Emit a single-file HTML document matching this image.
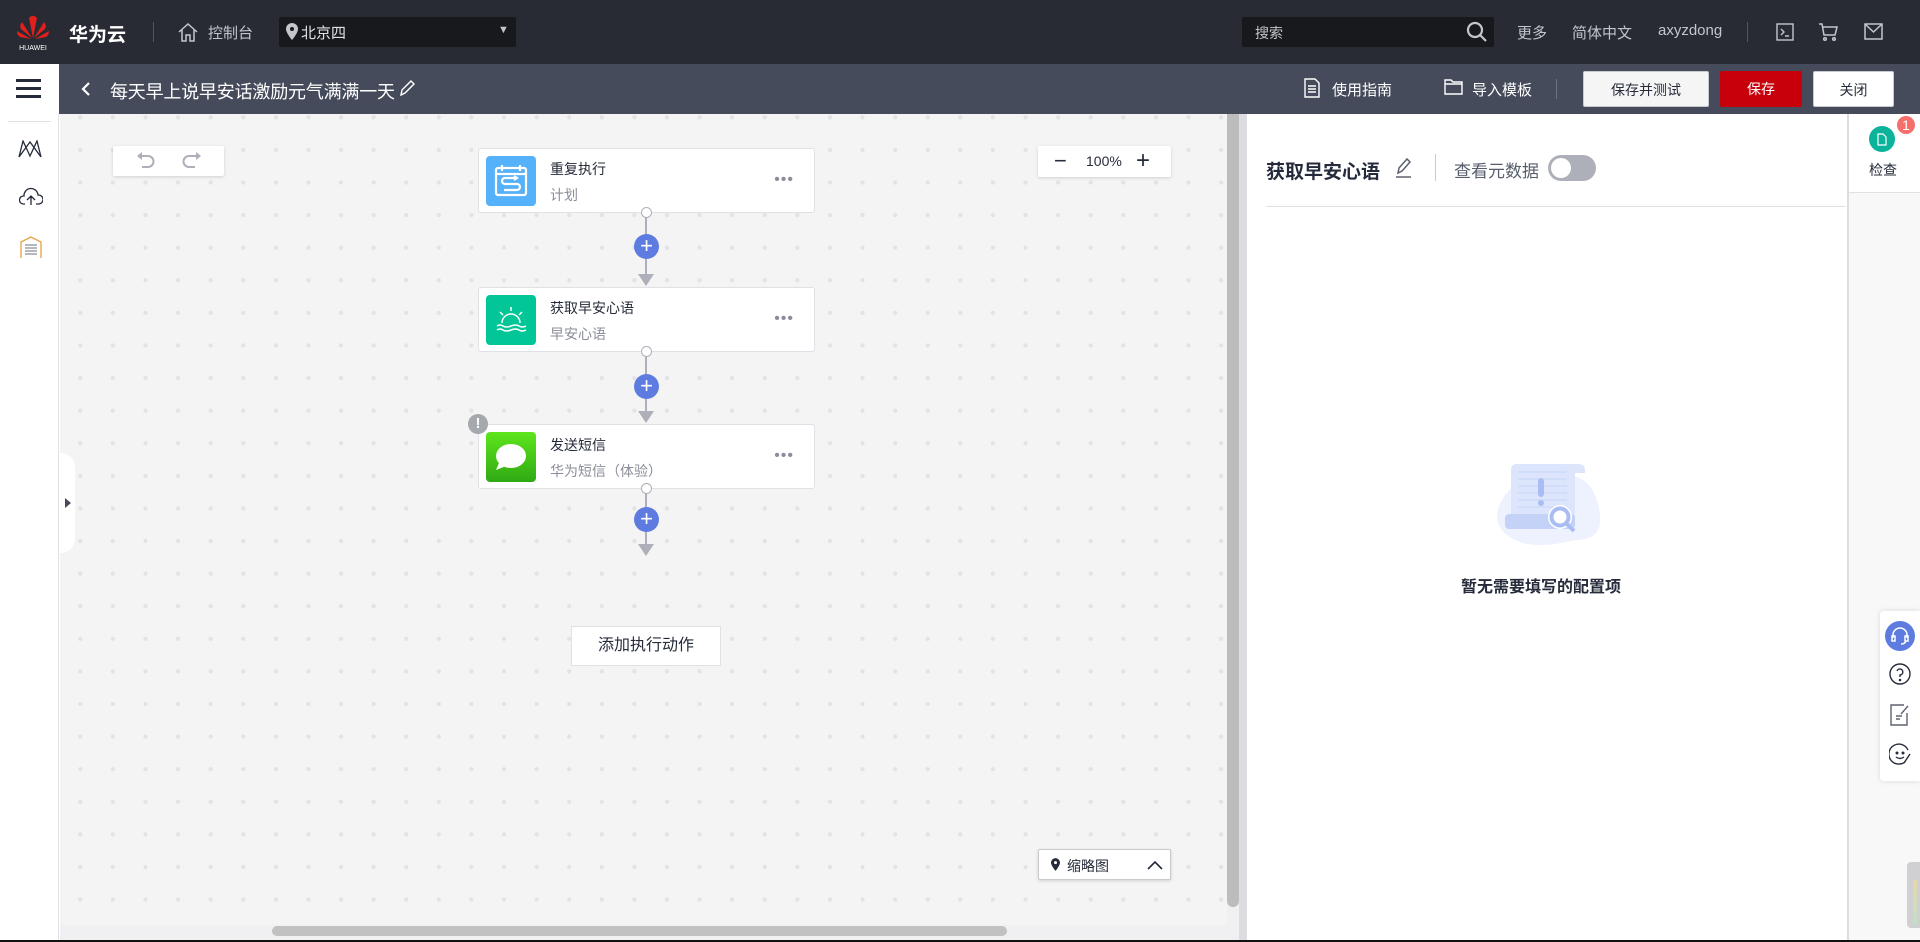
<!DOCTYPE html>
<html><head><meta charset="utf-8"><style>
*{margin:0;padding:0;box-sizing:border-box}
body{width:1920px;height:942px;overflow:hidden;font-family:"Liberation Sans","Noto Sans CJK SC",sans-serif;background:#fff;position:relative;color:#252b3a}
.abs{position:absolute}
.top{left:0;top:0;width:1920px;height:64px;background:#282b33;color:#c4c6cc;font-size:15px}
.sub{left:0;top:64px;width:1920px;height:50px;background:#454b5a}
.side{left:0;top:64px;width:59px;height:878px;background:#fff;border-right:1px solid #dfe1e6}
.canvas{left:60px;top:114px;width:1167px;height:811px;background-color:#f4f4f5;background-image:radial-gradient(circle,#e3e3e5 2px,transparent 2.3px);background-size:32.6px 32.6px;background-position:4px -13px}
.card{left:478px;width:337px;height:65px;background:#fff;border:1px solid #dfe1e6;border-radius:3px}
.card .ic{position:absolute;left:7px;top:7px;width:50px;height:50px;border-radius:4px}
.card .t{position:absolute;left:71px;top:10px;font-size:14px;color:#252b3a}
.card .s{position:absolute;left:71px;top:36px;font-size:14px;color:#8a8e99}
.card .d{position:absolute;right:20px;top:22px;font-size:16px;color:#8a8e99;letter-spacing:1px}
.line{width:2px;background:#adb0b8}
.plus{width:25px;height:25px;border-radius:50%;background:#5e7ce0;color:#fff;text-align:center;line-height:24px;font-size:22px}
.oc{width:11px;height:11px;border-radius:50%;border:1.5px solid #adb0b8;background:#fff}
.arr{width:0;height:0;border-left:8px solid transparent;border-right:8px solid transparent;border-top:12px solid #adb0b8}
.box{background:#fff;border-radius:2px;box-shadow:0 1px 3px rgba(0,0,0,.15)}
.btn{top:71px;height:36px;border-radius:2px;font-size:14px;text-align:center;line-height:36px}
</style></head><body>
<div class="abs top">
  <svg class="abs" style="left:14px;top:12px" width="38" height="40" viewBox="0 0 38 40">
    <g fill="#e0201c"><path d="M19 26 L15 6 Q18 3 19 4Z"/><path d="M19 26 L23 6 Q20 3 19 4Z"/><path d="M18 26 L8 10 Q5 14 7 17Z"/><path d="M20 26 L30 10 Q33 14 31 17Z"/><path d="M17 27 L3 19 Q3 23 6 25Z"/><path d="M21 27 L35 19 Q35 23 32 25Z"/></g>
    <text x="19" y="38" font-size="7" fill="#fff" text-anchor="middle" font-family="Liberation Sans">HUAWEI</text>
  </svg>
  <div class="abs" style="left:69px;top:20px;font-size:19px;font-weight:bold;color:#fff">华为云</div>
  <div class="abs" style="left:153px;top:22px;width:1px;height:20px;background:#555"></div>
  <svg class="abs" style="left:177px;top:21px" width="22" height="22" viewBox="0 0 22 22" fill="none" stroke="#c4c6cc" stroke-width="1.5"><path d="M2 11 L11 3 L20 11 M5 9 V20 H9 V14 H13 V20 H17 V9"/></svg>
  <div class="abs" style="left:208px;top:22px">控制台</div>
  <div class="abs" style="left:279px;top:17px;width:237px;height:30px;background:#18191c;border-radius:2px"></div>
  <svg class="abs" style="left:286px;top:23px" width="12" height="17" viewBox="0 0 12 17"><path d="M6 0a6 6 0 0 0-6 6c0 4 6 11 6 11s6-7 6-11a6 6 0 0 0-6-6z" fill="#c4c6cc"/><circle cx="6" cy="6" r="2" fill="#18191c"/></svg>
  <div class="abs" style="left:301px;top:22px;color:#dfe1e6">北京四</div>
  <div class="abs" style="left:498px;top:24px;font-size:11px;color:#c4c6cc">▼</div>
  <div class="abs" style="left:1242px;top:17px;width:252px;height:30px;background:#18191c;border-radius:2px"></div>
  <div class="abs" style="left:1255px;top:23px;font-size:14px;color:#c4c6cc">搜索</div>
  <svg class="abs" style="left:1466px;top:21px" width="22" height="22" viewBox="0 0 22 22" fill="none" stroke="#c4c6cc" stroke-width="2.2"><circle cx="9" cy="9" r="7"/><path d="M14 14 L20 20"/></svg>
  <div class="abs" style="left:1517px;top:22px">更多</div>
  <div class="abs" style="left:1572px;top:22px">简体中文</div>
  <div class="abs" style="left:1658px;top:22px">axyzdong</div>
  <div class="abs" style="left:1747px;top:22px;width:1px;height:20px;background:#555"></div>
  <svg class="abs" style="left:1776px;top:23px" width="18" height="18" viewBox="0 0 18 18" fill="none" stroke="#c4c6cc" stroke-width="1.4"><rect x="1" y="1" width="16" height="16"/><path d="M5 6 L8 9 L5 12 M9 13 H13"/></svg>
  <svg class="abs" style="left:1818px;top:22px" width="20" height="20" viewBox="0 0 20 20" fill="none" stroke="#c4c6cc" stroke-width="1.5"><path d="M1 2 H4 L6 13 H17 L19 5 H5"/><circle cx="7" cy="17" r="1.3"/><circle cx="16" cy="17" r="1.3"/></svg>
  <svg class="abs" style="left:1864px;top:23px" width="19" height="17" viewBox="0 0 19 17" fill="none" stroke="#c4c6cc" stroke-width="1.5"><rect x="1" y="1" width="17" height="15"/><path d="M1 1 L9.5 9 L18 1"/></svg>
</div>
<div class="abs sub">
  <div class="abs" style="left:0;top:0;width:59px;height:50px;background:#fff"></div>
  <div class="abs" style="left:16px;top:15px;width:25px;height:3px;background:#252b3a;box-shadow:0 8px 0 #252b3a,0 16px 0 #252b3a"></div>
  <svg class="abs" style="left:80px;top:17px" width="12" height="16" viewBox="0 0 12 16"><path d="M9 2 L3 8 L9 14" fill="none" stroke="#fff" stroke-width="2.2"/></svg>
  <div class="abs" style="left:110px;top:14px;font-size:18px;color:#fff;letter-spacing:-0.2px">每天早上说早安话激励元气满满一天</div>
  <svg class="abs" style="left:398px;top:15px" width="18" height="20" viewBox="0 0 18 20" fill="none" stroke="#fff" stroke-width="1.4"><path d="M3 16 L4 11 L13 2 L16 5 L7 14 Z"/></svg>
  <svg class="abs" style="left:1304px;top:14px" width="16" height="20" viewBox="0 0 16 20" fill="none" stroke="#fff" stroke-width="1.4"><path d="M1 1 H11 L15 5 V19 H1 Z M4 8 H12 M4 11 H12 M4 14 H12"/></svg>
  <div class="abs" style="left:1332px;top:15px;font-size:15px;color:#fff">使用指南</div>
  <svg class="abs" style="left:1444px;top:15px" width="19" height="16" viewBox="0 0 19 16" fill="none" stroke="#fff" stroke-width="1.4"><path d="M1 1 H7 L9 3 H18 V15 H1 Z M1 5 H18"/></svg>
  <div class="abs" style="left:1472px;top:15px;font-size:15px;color:#fff">导入模板</div>
  <div class="abs" style="left:1556px;top:15px;width:1px;height:20px;background:#6d7280"></div>
</div>
<div class="abs btn" style="left:1583px;width:126px;background:#f5f5f6;border:1px solid #c8cad0;color:#252b3a">保存并测试</div>
<div class="abs btn" style="left:1720px;width:82px;background:#c7000b;color:#fff">保存</div>
<div class="abs btn" style="left:1813px;width:81px;background:#fff;border:1px solid #c8cad0;color:#252b3a">关闭</div>

<div class="abs side" style="top:114px;height:828px">
  <div class="abs" style="left:8px;top:7px;width:43px;height:1px;background:#dfe1e6"></div>
  <svg class="abs" style="left:18px;top:26px" width="24" height="18" viewBox="0 0 24 18" fill="none" stroke="#252b3a" stroke-width="1.3"><path d="M1 17 L5 1 L12 16 L19 1 L23 17 M1 17 L12 2 L23 17"/></svg>
  <svg class="abs" style="left:19px;top:73px" width="24" height="20" viewBox="0 0 24 20" fill="none" stroke="#252b3a" stroke-width="1.3"><path d="M6 17 H4 A4 4 0 0 1 5 9 A7 7 0 0 1 19 8 A4.5 4.5 0 0 1 20 17 H17 M12 18 V9 M8 13 L12 9 L16 13"/></svg>
  <svg class="abs" style="left:20px;top:122px" width="22" height="22" viewBox="0 0 22 22" fill="none" stroke-width="1.3"><path d="M1 22 V6 L11 1 L21 6 V22" stroke="#e8a040"/><path d="M5 9 H17 M5 12 H17 M5 15 H17 M5 18 H17" stroke="#8a8e99"/></svg>
</div>
<div class="abs canvas"></div>
<div class="abs" style="left:60px;top:453px;width:15px;height:100px;background:#fff;border-radius:0 14px 14px 0"></div>
<div class="abs" style="left:65px;top:498px;width:0;height:0;border-top:5px solid transparent;border-bottom:5px solid transparent;border-left:6px solid #454b5a"></div>
<div class="abs box" style="left:113px;top:146px;width:111px;height:30px"></div>
<svg class="abs" style="left:135px;top:150px" width="70" height="22" viewBox="0 0 70 22" fill="none" stroke="#adb0b8" stroke-width="2"><path d="M5 6 H13 A5.5 5.5 0 0 1 13 17 H7"/><path d="M2 6 L7 2 V10Z" fill="#adb0b8" stroke="none"/><path d="M62 6 H54 A5.5 5.5 0 0 0 54 17 H60"/><path d="M66 6 L61 2 V10Z" fill="#adb0b8" stroke="none"/></svg>
<div class="abs box" style="left:1038px;top:146px;width:133px;height:31px;font-size:14px;color:#252b3a">
  <span class="abs" style="left:16px;top:2px;font-size:22px">−</span><span class="abs" style="left:48px;top:7px">100%</span><span class="abs" style="left:98px;top:1px;font-size:24px">+</span></div>
<div class="abs box" style="left:1038px;top:849px;width:133px;height:31px;font-size:14px;border:1px solid #c8cad0">
  <svg class="abs" style="left:12px;top:8px" width="9" height="13" viewBox="0 0 12 17"><path d="M6 0a6 6 0 0 0-6 6c0 4 6 11 6 11s6-7 6-11a6 6 0 0 0-6-6z" fill="#252b3a"/><circle cx="6" cy="6" r="2" fill="#fff"/></svg>
  <span class="abs" style="left:28px;top:6px">缩略图</span>
  <svg class="abs" style="left:108px;top:10px" width="16" height="10" viewBox="0 0 16 10"><path d="M1 9 L8 2 L15 9" fill="none" stroke="#252b3a" stroke-width="1.6"/></svg></div>

<!-- flow -->
<div class="abs card" style="top:148px"><div class="ic" style="background:#55b1f9"><svg width="50" height="50" viewBox="0 0 50 50" fill="none" stroke="#fff" stroke-width="2.2"><rect x="10" y="12" width="30" height="27" rx="2"/><path d="M16 9 V15 M34 9 V15 M10 18 H40"/><path d="M30 22 H19 A3 3 0 0 0 19 28 H31 A3 3 0 0 1 31 34 H18 M28 20 L31 22 L28 24"/></svg></div><div class="t">重复执行</div><div class="s">计划</div><div class="d">•••</div></div>
<div class="abs card" style="top:287px"><div class="ic" style="background:#02c697"><svg width="50" height="50" viewBox="0 0 50 50" fill="none" stroke="#fff" stroke-width="1.5"><path d="M16 28 A9 9 0 0 1 34 28 M25 12 V16 M14 17 L17 20 M36 17 L33 20 M11 31 Q14 29 17 31 T25 31 T33 31 T40 31 M11 35 Q14 33 17 35 T25 35 T33 35 T40 35"/></svg></div><div class="t">获取早安心语</div><div class="s">早安心语</div><div class="d">•••</div></div>
<div class="abs card" style="top:424px"><div class="ic" style="background:linear-gradient(#5ee51d,#30a914)"><svg width="50" height="50" viewBox="0 0 50 50"><ellipse cx="25" cy="24" rx="15" ry="12" fill="#fff"/><path d="M13 31 L10 38 L20 34Z" fill="#fff"/></svg></div><div class="t">发送短信</div><div class="s">华为短信（体验）</div><div class="d">•••</div></div>
<div class="abs" style="left:468px;top:414px;width:20px;height:20px;border-radius:50%;background:#a5a8ad;color:#fff;font-weight:bold;text-align:center;line-height:20px;font-size:15px">!</div>

<div class="abs line" style="left:645px;top:213px;height:64px"></div>
<div class="abs oc" style="left:641px;top:207px"></div>
<div class="abs plus" style="left:634px;top:234px">+</div>
<div class="abs arr" style="left:638px;top:274px"></div>
<div class="abs line" style="left:645px;top:351px;height:60px"></div>
<div class="abs oc" style="left:641px;top:346px"></div>
<div class="abs plus" style="left:634px;top:374px">+</div>
<div class="abs arr" style="left:638px;top:411px"></div>
<div class="abs line" style="left:645px;top:489px;height:56px"></div>
<div class="abs oc" style="left:641px;top:483px"></div>
<div class="abs plus" style="left:634px;top:507px">+</div>
<div class="abs arr" style="left:638px;top:544px"></div>
<div class="abs" style="left:571px;top:626px;width:150px;height:40px;background:#fff;border:1px solid #dfe1e6;text-align:center;line-height:38px;font-size:16px">添加执行动作</div>

<!-- scrollbars -->
<div class="abs" style="left:60px;top:925px;width:1187px;height:15px;background:#f0f0f2"></div>
<div class="abs" style="left:272px;top:926px;width:735px;height:10px;border-radius:5px;background:#c1c1c1"></div>
<div class="abs" style="left:1227px;top:114px;width:12px;height:812px;background:#f0f0f2"></div>
<div class="abs" style="left:1227px;top:114px;width:12px;height:793px;border-radius:0 0 6px 6px;background:#bcbcbc"></div>
<div class="abs" style="left:1239px;top:114px;width:8px;height:826px;background:#dcdde1"></div>
<div class="abs" style="left:0;top:940px;width:1920px;height:2px;background:#111"></div>

<!-- right panel -->
<div class="abs" style="left:1266px;top:157px;font-size:19px;font-weight:bold;color:#252b3a">获取早安心语</div>
<svg class="abs" style="left:1394px;top:156px" width="20" height="24" viewBox="0 0 20 24" fill="none" stroke="#5e6270" stroke-width="1.5"><path d="M4 17 L5 12 L13 3 L16 6 L8 15 Z M2 21 H17"/></svg>
<div class="abs" style="left:1435px;top:154px;width:1px;height:27px;background:#c8cad0"></div>
<div class="abs" style="left:1454px;top:157px;font-size:17px;color:#575d6c">查看元数据</div>
<div class="abs" style="left:1548px;top:155px;width:48px;height:26px;border-radius:13px;background:#adb0b8"></div>
<div class="abs" style="left:1551px;top:158px;width:20px;height:20px;border-radius:50%;background:#fff"></div>
<div class="abs" style="left:1266px;top:206px;width:580px;height:1px;background:#dfe1e6"></div>
<svg class="abs" style="left:1485px;top:455px" width="130" height="100" viewBox="0 0 130 100">
  <path d="M20 40 Q40 15 80 20 Q110 20 115 60 Q118 85 90 85 Q50 95 30 85 Q0 70 20 40Z" fill="#eef2fe"/>
  <path d="M26 15 Q26 9 32 9 H93 Q100 9 100 15 V18 H90 V70 H26 Z" fill="#dce5fc"/>
  <rect x="20" y="59" width="70" height="15" rx="4" fill="#c4d2f7"/>
  <g stroke="#c8d5f8" stroke-width="1"><path d="M33 17 H82 M33 24 H82 M33 31 H82 M33 38 H82 M33 45 H82 M33 52 H82"/></g>
  <rect x="53" y="23" width="6" height="19" rx="3" fill="#a9bdf3"/><circle cx="56" cy="48" r="3" fill="#a9bdf3"/>
  <circle cx="75" cy="62" r="12" fill="#fff"/><circle cx="75" cy="62" r="8.5" fill="none" stroke="#a9bdf3" stroke-width="4"/><path d="M81 68 L89 76" stroke="#a9bdf3" stroke-width="4"/>
</svg>
<div class="abs" style="left:1461px;top:573px;font-size:16px;font-weight:bold;color:#252b3a">暂无需要填写的配置项</div>

<!-- right rail -->
<div class="abs" style="left:1847px;top:114px;width:2px;height:826px;background:#dcdde1"></div>
<div class="abs" style="left:1849px;top:114px;width:71px;height:826px;background:#f8f8f9"></div>
<div class="abs" style="left:1849px;top:114px;width:71px;height:79px;background:#fff;border-bottom:1px solid #dfe1e6"></div>
<div class="abs" style="left:1869px;top:126px;width:26px;height:26px;border-radius:50%;background:#0bb39b"></div>
<svg class="abs" style="left:1877px;top:133px" width="10" height="13" viewBox="0 0 10 13" fill="none" stroke="#fff" stroke-width="1.2"><path d="M1 1 H6 L9 4 V12 H1Z"/></svg>
<div class="abs" style="left:1897px;top:116px;width:18px;height:18px;border-radius:50%;background:#f66f6a;color:#fff;text-align:center;font-size:14px;line-height:18px">1</div>
<div class="abs" style="left:1869px;top:160px;font-size:14px;color:#252b3a">检查</div>
<div class="abs" style="left:1880px;top:611px;width:40px;height:170px;background:#fff;box-shadow:0 0 6px rgba(0,0,0,.12);border-radius:4px 0 0 4px"></div>
<div class="abs" style="left:1885px;top:621px;width:30px;height:30px;border-radius:50%;background:#5e7ce0"></div>
<svg class="abs" style="left:1889px;top:626px" width="22" height="20" viewBox="0 0 22 20" fill="none" stroke="#fff" stroke-width="1.5"><path d="M4 12 V9 A7 7 0 0 1 18 9 V12 M3 10 H6 V15 H3Z M16 10 H19 V15 H16Z M17 15 Q16 18 12 18"/></svg>
<svg class="abs" style="left:1889px;top:663px" width="22" height="22" viewBox="0 0 22 22" fill="none" stroke="#252b3a" stroke-width="1.4"><circle cx="11" cy="11" r="10"/><path d="M8 8 A3 3 0 1 1 11 12 V14"/><circle cx="11" cy="17" r=".6"/></svg>
<svg class="abs" style="left:1890px;top:704px" width="20" height="22" viewBox="0 0 20 22" fill="none" stroke="#5e6270" stroke-width="1.4"><path d="M14 1 H1 V21 H17 V9 M6 12 H12 M6 15 H10 M11 10 L18 2"/></svg>
<svg class="abs" style="left:1889px;top:743px" width="22" height="22" viewBox="0 0 22 22" fill="none" stroke="#252b3a" stroke-width="1.4"><path d="M19 7 A10 10 0 1 0 16 19"/><circle cx="8" cy="10" r=".8"/><circle cx="14" cy="10" r=".8"/><path d="M7 14 Q11 17 15 14 M15 20 L21 11"/></svg>
<div class="abs" style="left:1907px;top:862px;width:13px;height:66px;border-radius:4px 0 0 4px;background:#d0d0d3"></div>
<div class="abs" style="left:1913px;top:880px;width:4px;height:45px;background:linear-gradient(#e8d8a8,#bfe0c8)"></div>
</body></html>
